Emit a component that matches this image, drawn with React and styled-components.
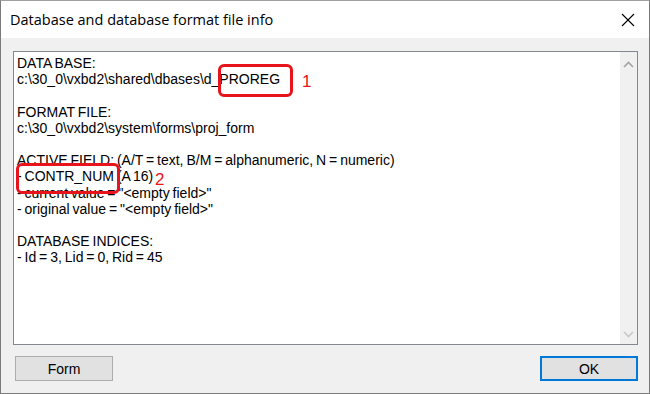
import React from "react";
import styled, { createGlobalStyle } from "styled-components";

const Global = createGlobalStyle`
  html, body { margin: 0; padding: 0; background: #ffffff; }
  body { width: 650px; height: 394px; overflow: hidden; }
  * { box-sizing: border-box; }
`;

const Window = styled.div`
  position: relative;
  width: 650px;
  height: 394px;
  border: 1px solid #7a7a7a;
  border-top-color: #a0a0a0;
  display: flex;
  flex-direction: column;
  background: #f0f0f0;
  font-family: "Liberation Sans", Arial, sans-serif;
`;

const TitleBar = styled.div`
  height: 37px;
  flex: none;
  background: #ffffff;
  display: flex;
  align-items: center;
  justify-content: space-between;
  padding: 0 14px 0 9px;
`;

const Title = styled.div`
  font-family: "Open Sans", "Noto Sans", sans-serif;
  font-size: 14.5px;
  color: #000;
`;

const CloseIcon = styled.svg`
  width: 14px;
  height: 14px;
  display: block;
`;

const Body = styled.div`
  flex: 1;
  display: flex;
  flex-direction: column;
  padding: 13px 11px 11px 12px;
  gap: 11px;
`;

const TextBox = styled.div`
  height: 294px;
  border: 1px solid #828790;
  background: #ffffff;
  display: flex;
`;

const TextArea = styled.div`
  flex: 1;
  padding: 3px 3px;
  font-size: 14px;
  line-height: 16.2px;
  word-spacing: -1px;
  color: #000;
  white-space: pre;
`;

const Scrollbar = styled.div`
  width: 17px;
  background: #f0f0f0;
  display: flex;
  flex-direction: column;
  justify-content: space-between;
  align-items: center;
  padding: 9px 0 6px;
`;

const Arrow = styled.svg`
  width: 11px;
  height: 7px;
  display: block;
`;

const ButtonRow = styled.div`
  display: flex;
  justify-content: space-between;
  padding-left: 2px;
`;

const Button = styled.div`
  width: ${(p) => p.$w}px;
  height: 25px;
  background: #e1e1e1;
  border: ${(p) => (p.$default ? "2px solid #0078d7" : "1px solid #adadad")};
  display: flex;
  align-items: center;
  justify-content: center;
  font-size: 14px;
  color: #000;
`;

const Mark = styled.div`
  position: absolute;
  border: 3px solid #e8141c;
  border-radius: 6px;
`;

const MarkNum = styled.div`
  position: absolute;
  color: #e8141c;
  font-family: "Liberation Sans", Arial, sans-serif;
  font-size: 17px;
  line-height: 1;
`;

const lines = [
  "DATA BASE:",
  "c:\\30_0\\vxbd2\\shared\\dbases\\d_PROREG",
  "",
  "FORMAT FILE:",
  "c:\\30_0\\vxbd2\\system\\forms\\proj_form",
  "",
  "ACTIVE FIELD: (A/T = text, B/M = alphanumeric, N = numeric)",
  "- CONTR_NUM (A 16)",
  "- current value = \"<empty field>\"",
  "- original value = \"<empty field>\"",
  "",
  "DATABASE INDICES:",
  "- Id = 3, Lid = 0, Rid = 45",
];

export default function App() {
  return (
    <>
      <Global />
      <Window>
        <TitleBar>
          <Title>Database and database format file info</Title>
          <CloseIcon viewBox="0 0 14 14">
            <path d="M1 1 L13 13 M13 1 L1 13" stroke="#000" strokeWidth="1.1" fill="none" />
          </CloseIcon>
        </TitleBar>
        <Body>
          <TextBox>
            <TextArea>{lines.join("\n")}</TextArea>
            <Scrollbar>
              <Arrow viewBox="0 0 11 7">
                <path d="M1 6 L5.5 1.5 L10 6" stroke="#a3a3a3" strokeWidth="1.6" fill="none" />
              </Arrow>
              <Arrow viewBox="0 0 11 7">
                <path d="M1 1 L5.5 5.5 L10 1" stroke="#c8c8c8" strokeWidth="1.6" fill="none" />
              </Arrow>
            </Scrollbar>
          </TextBox>
          <ButtonRow>
            <Button $w={98}>Form</Button>
            <Button $w={98} $default>OK</Button>
          </ButtonRow>
        </Body>
        <Mark style={{ left: 217, top: 63, width: 75, height: 33 }} />
        <MarkNum style={{ left: 301, top: 72 }}>1</MarkNum>
        <Mark style={{ left: 15, top: 162, width: 104, height: 31 }} />
        <MarkNum style={{ left: 154, top: 170 }}>2</MarkNum>
      </Window>
    </>
  );
}
